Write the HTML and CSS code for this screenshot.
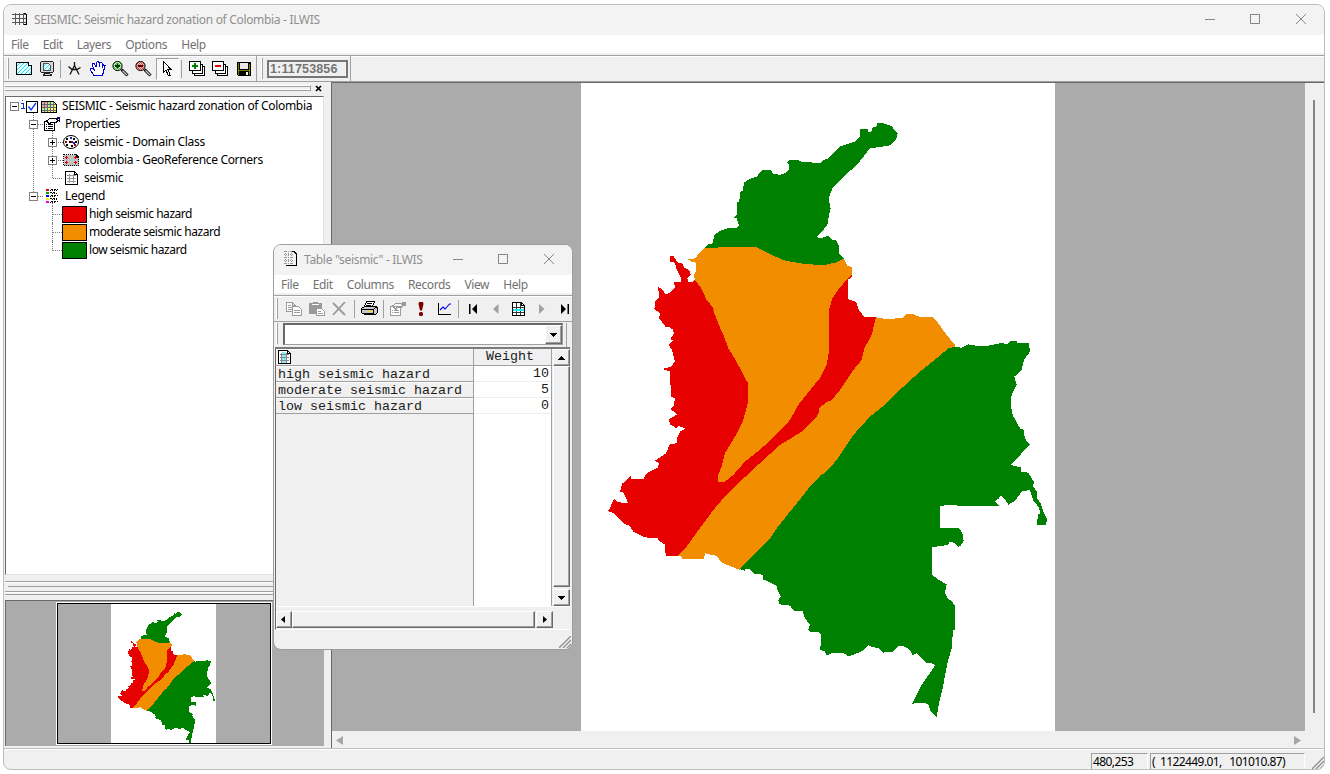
FILE: index.html
```html
<!DOCTYPE html>
<html lang="en">
<head>
<meta charset="utf-8">
<title>SEISMIC: Seismic hazard zonation of Colombia - ILWIS</title>
<link rel="stylesheet" href="styles.css">
</head>
<body>
<svg class="defs" width="0" height="0">
  <defs>
    <symbol id="colombia" viewBox="581 83 474 648">
      <g fill="#e60000">
        <path transform="translate(580 100) scale(.33333)" d="M270 468 280 468 294 488 305 488 312 502 328 510 332 525 322 535 325 545 340 545 345 537 400 560 430 700 280 690 270 682 255 682 255 668 240 660 235 655 243 645 240 636 223 627 226 605 238 592 234 562 243 565 250 572 257 583 270 578 285 562 282 545 303 545 303 535 290 508 285 488 270 486ZM803 536 816 525 816 530 803 540 803 597 827 605 835 628 852 650 888 652 886 660 876 695 740 695 740 590Z"/>
        <path transform="translate(590 310) scale(.33333)" d="M195 0 212 10 206 25 215 35 228 52 245 48 252 70 240 88 249 90 237 105 246 120 255 155 242 170 216 177 240 185 243 260 255 265 250 290 242 297 261 313 237 328 240 343 260 355 265 348 287 355 270 365 260 385 262 400 240 402 228 430 195 452 208 460 203 473 170 490 160 507 125 508 121 497 105 515 97 520 90 545 100 548 115 580 105 580 80 575 72 567 65 580 60 597 52 602 75 612 100 640 120 648 130 665 165 682 203 685 210 695 225 703 227 738 262 738 600 600 720 272 720 0Z"/>
        <path transform="translate(820 300) scale(.33333)" d="M35 0 87 0 110 10 118 35 132 50 168 52 200 100 140 250 0 330-10 232 0 20Z"/>
      </g>
      <g fill="#f28d00">
        <path transform="translate(580 100) scale(.33333)" d="M375 443 600 430 792 478 802 497 815 502 816 525 803 536 775 568 757 595 747 630 745 690 422 690 410 650 397 620 380 600 362 562 345 540 342 525 348 515 348 488 335 486 330 482 322 478 345 475 360 458Z"/>
        <path transform="translate(590 310) scale(.33333)" d="M369 0 385 40 400 75 415 115 437 150 455 185 474 220 473 280 460 330 435 380 405 430 395 470 384 495 384 516 404 516 430 495 465 455 500 427 545 388 600 330 625 285 670 228 690 205 710 165 716 130 717 0ZM262 738 275 740 275 748 342 748 345 730 380 738 395 758 450 780 720 500 720 272 706 278 695 290 680 320 640 362 570 405 520 450 450 515 400 565 370 600 320 668 290 710Z"/>
        <path transform="translate(820 300) scale(.33333)" d="M168 52 185 55 200 58 248 53 258 43 280 43 300 51 337 52 355 70 378 102 405 135 405 145 0 540-2 325 8 316 35 300 60 270 100 210 125 180 133 145 155 105Z"/>
      </g>
      <g fill="#008000">
        <path transform="translate(580 100) scale(.33333)" d="M375 443 385 433 399 430 402 405 417 395 432 388 447 384 470 383 477 375 470 355 460 352 470 345 471 307 478 304 480 275 488 273 492 248 507 238 530 230 545 211 574 211 578 220 600 225 617 218 627 207 627 195 621 187 630 180 655 179 665 187 722 188 730 180 745 176 770 150 778 140 825 125 840 110 840 88 863 88 865 96 875 94 875 85 890 78 890 70 912 70 935 78 945 92 953 100 950 115 930 136 905 140 870 145 858 160 835 190 800 222 770 250 757 265 746 295 752 325 747 345 742 375 728 392 712 410 718 415 745 408 755 418 770 422 776 435 778 460 792 475 770 487 730 496 670 491 615 482 575 465 545 450 528 440 414 440 414 443Z"/>
        <path transform="translate(590 310) scale(.33333)" d="M450 778 465 783 465 777 478 777 490 787 505 790 520 797 520 810 725 810 725 471 690 500 660 530 600 605 560 655 530 700 480 752Z"/>
        <path transform="translate(820 300) scale(.33333)" d="M385 145 405 141 425 143 445 133 475 138 500 138 540 130 565 131 570 124 590 124 593 129 627 129 630 155 612 180 605 210 583 230 590 255 575 285 572 315 578 345 600 385 613 390 612 405 618 420 630 435 605 460 573 495 603 502 604 515 625 518 641 545 640 560 650 575 652 595 662 610 672 640 681 657 678 674 652 674 653 645 660 640 657 622 640 602 630 570 605 575 585 603 565 614 555 597 542 586 535 597 525 603 537 617 411 617 405 614 375 616 360 619 360 684 418 685 430 705 428 730 415 740 405 730 390 724 383 735 360 738 336 742 336 780 0 780 0 527 20 515 50 480 100 405 150 350 200 310 250 260 300 215 350 175Z"/>
        <path transform="translate(740 540) scale(.33333)" d="M0 87 84 0 672 0 660 20 655 18 650 7 630 3 620 12 600 17 576 21 576 105 600 122 620 133 615 158 622 175 635 183 645 198 645 270 639 270 635 325 622 370 607 450 597 490 590 530 572 515 565 492 545 488 517 491 545 435 585 377 580 371 560 369 545 355 530 340 517 346 510 330 490 318 475 318 460 335 428 338 415 325 395 320 385 315 370 332 345 342 325 349 310 338 275 340 260 347 255 335 241 330 243 285 235 277 212 277 205 268 210 255 195 235 188 214 162 212 150 197 118 193 115 180 123 170 112 150 110 137 85 125 70 118 68 103 45 102 30 88Z"/>
      </g>
    </symbol>
    <pattern id="cyan" width="4" height="4" patternUnits="userSpaceOnUse"><rect width="4" height="4" fill="#e2ffff"/><path d="M0 0h1v1h-1zM2 2h1v1h-1zM1 3h1v1h-1zM3 1h1v1h-1z" fill="#29d9ec"/></pattern>
    <pattern id="greendots" width="2" height="2" patternUnits="userSpaceOnUse"><rect width="2" height="2" fill="#d9ffd9"/><path d="M0 0h1v1h-1zM1 1h1v1h-1z" fill="#4ad04a"/></pattern>
    <pattern id="reddots" width="2" height="2" patternUnits="userSpaceOnUse"><rect width="2" height="2" fill="#f0b8b8"/><path d="M0 0h1v1h-1zM1 1h1v1h-1z" fill="#d05858"/></pattern>
    <symbol id="lens" viewBox="0 0 17 17">
      <path d="M9.500 8.500 15.500 14.500" stroke="#000" stroke-width="3"/><path d="M10.500 9.500 15 14" stroke="#d0d0d0" stroke-width="1.200"/>
    </symbol>
    <symbol id="caption" viewBox="0 0 110 12">
      <path d="M0 6.500h10M45.500 1.500h9v9h-9zM91 1l10 10M101 1 91 11" fill="none" stroke="#858585"/>
    </symbol>
    <symbol id="layers" viewBox="0 0 17 16">
      <path d="M5.500 5.500h10v9h-10z" fill="#fff" stroke="#000"/><path d="M3.500 3.500h10v9h-10z" fill="#fff" stroke="#000"/><path d="M.5.500h11v9h-11z" fill="#fff" stroke="#000"/>
    </symbol>
    <symbol id="grip" viewBox="0 0 12 12"><path d="M0 12 12 0M4 12l8-8M8 12l4-4" stroke="#8f8f8f" stroke-width="1.400"/></symbol>
    <symbol id="sheet" viewBox="0 0 13 14">
      <path d="M.5.500h9l3 3v10h-12z" fill="#fff" stroke="#000"/><path d="M9.500.500v3h3" fill="none" stroke="#000"/>
    </symbol>
  </defs>
</svg>

<div class="window main">
  <header class="titlebar">
    <svg class="app-icon" width="17" height="14" shape-rendering="crispEdges"><path d="M0 2.500h15M0 6.500h15M0 10.500h15M3.500.500v12M7.500.500v12M11.500.500v12" stroke="#555" fill="none"/><path d="M12 1.500h2M14.500 2v10.500h-3" stroke="#000" fill="none"/></svg>
    <span class="title title-main">SEISMIC: Seismic hazard zonation of Colombia - ILWIS</span>
    <svg class="caption" width="110" height="12" viewBox="0 0 110 12"><use href="#caption"/></svg>
  </header>
  <nav class="menubar"><span>File</span><span>Edit</span><span>Layers</span><span>Options</span><span>Help</span></nav>
  <div class="toolbar">
    <i class="handle"></i>
    <span class="tool"><svg width="17" height="13" shape-rendering="crispEdges"><path d="M.5.500h12l3 3v9h-15z" fill="url(#cyan)" stroke="#000"/><path d="M12.500.500v3h3" fill="#fff" stroke="#000"/></svg></span>
    <span class="tool"><svg width="15" height="16" shape-rendering="crispEdges"><path d="M1.500.500h11l1 1v9l-1 1h-11l-1-1v-9z" fill="#d8d8d8" stroke="#222"/><path d="M3.500 2.500h5l2 2v5h-7z" fill="url(#cyan)" stroke="#555"/><path d="M4 12h6v1h2v2H3v-2h1z" fill="#222"/><path d="M5 13h5v1H5z" fill="#ddd"/></svg></span>
    <i class="sep first"></i>
    <span class="tool"><svg width="13" height="13"><path d="M6.500 0v4M6.500 3.500 2 12.500M6.500 3.500l4.500 9M.5 4.500 4 7.500h5l3.500-2" fill="none" stroke="#111" stroke-width="1.300"/></svg></span>
    <span class="tool"><svg width="17" height="16" shape-rendering="crispEdges"><path d="M5 14.500 1.500 9.500v-2h2l2 2-2-5v-2h2L7 6V1.500l2-1 1 1v4l1-4 2 .5v5l1.500-3 1.500.500-1 4-1.500 6V15z" fill="#fff" stroke="#0000e0"/></svg></span>
    <span class="tool"><svg width="17" height="16" viewBox="0 0 17 16"><use href="#lens" width="17" height="17"/><circle cx="5.500" cy="5" r="4.600" fill="url(#greendots)" stroke="#000"/><path d="M3 5h5M5.500 2.500v5" stroke="#003800" stroke-width="1.800"/></svg></span>
    <span class="tool"><svg width="17" height="16" viewBox="0 0 17 16"><use href="#lens" width="17" height="17"/><circle cx="5.500" cy="5" r="4.600" fill="url(#reddots)" stroke="#000"/><path d="M3 5h5" stroke="#500" stroke-width="1.800"/></svg></span>
    <span class="tool pressed"><svg width="9" height="15" shape-rendering="crispEdges"><path d="M.5.500v11l2.500-2.500 2 5h2l-2-5.500h3z" fill="#fff" stroke="#000"/></svg></span>
    <i class="sep tight"></i>
    <span class="tool"><svg width="17" height="16" shape-rendering="crispEdges"><use href="#layers" width="17" height="16"/><path d="M3 5h6M6 2v6" stroke="#008000" stroke-width="2"/></svg></span>
    <span class="tool"><svg width="17" height="16" shape-rendering="crispEdges"><use href="#layers" width="17" height="16"/><path d="M3 5h6" stroke="#e00000" stroke-width="2"/></svg></span>
    <span class="tool"><svg width="14" height="14" shape-rendering="crispEdges"><path d="M0 0h14v14H1l-1-1z" fill="#000"/><path d="M1 1h1v12H1zM12 2h1v11h-1zM2 8h10v1H2z" fill="#808000"/><path d="M3 1h8v6H3z" fill="#e8e8e8"/><path d="M9 10h2v3H9z" fill="#fff"/></svg></span>
    <i class="sep end"></i><i class="handle scale-handle"></i>
    <span class="scale">1:11753856</span>
    <i class="sep last"></i>
  </div>
  <div class="body">
    <aside class="side">
      <div class="dock-head"><i class="dock-lines"></i><svg width="7" height="7"><path d="M1 1l5 5M6 1 1 6" stroke="#000" stroke-width="1.700"/></svg></div>
      <div class="tree">
        <div class="row"><svg width="56" height="18" shape-rendering="crispEdges"><path d="M4.500 5.500h8v8h-8z" fill="#fff" stroke="#7f7f7f"/><path d="M6 9.500h5" stroke="#000"/><path d="M15 6h2v5M15 11.500h4M16.500 3v1" fill="none" stroke="#1030e0"/><path d="M27.500 16v2" stroke="#777" stroke-dasharray="1 1"/><path d="M20.500 4.500h11v11h-11z" fill="#fff" stroke="#000"/><path d="M22.500 9.500 25 13l5-7" fill="none" stroke="#0030ff" shape-rendering="auto" stroke-width="1.300"/><path d="M35.500 4.500h12l3 3v8h-15z" fill="#fff"/><path d="M36 5h5v5h-5z" fill="#f8a8a8"/><path d="M41 5h5v5h-5z" fill="#a0f0a0"/><path d="M46 6h4v9h-4zM41 10h5v5h-5z" fill="#faf480"/><path d="M36 10h5v5h-5z" fill="#c0f0a0"/><path d="M35 7.500h16M35 10.500h16M35 13.500h16M38.500 4v12M41.500 4v12M44.500 4v12M47.500 4v12" stroke="#666"/><path d="M35.500 4.500h12l3 3v8h-15z" fill="none" stroke="#000"/></svg><span class="t-root">SEISMIC - Seismic hazard zonation of Colombia</span></div>
        <div class="row"><svg width="59" height="18" shape-rendering="crispEdges"><path d="M27.500 0v5M32 9.500h6" stroke="#777" stroke-dasharray="1 1"/><path d="M27.500 14v4M46.500 16v2" stroke="#777" stroke-dasharray="1 1"/><path d="M23.500 5.500h8v8h-8z" fill="#fff" stroke="#7f7f7f"/><path d="M25 9.500h5" stroke="#000"/><path d="M38.500 6.500h10v9h-10z" fill="#fff" stroke="#000"/><path d="M40 9.500h1M42 9.500h5M40 11.500h1M42 11.500h5M40 13.500h1M42 13.500h5" stroke="#000"/><path d="M41 5.500l3-2h6l2 2-2 2h-5l-1 2-2-2z" fill="#fff" stroke="#000"/><path d="M51 2h3v5h-1V4h-2z" fill="#000080"/></svg><span class="t-prop">Properties</span></div>
        <div class="row"><svg width="78" height="18" shape-rendering="crispEdges"><path d="M27.500 0v18M46.500 0v18M52 9.500h5" stroke="#777" stroke-dasharray="1 1"/><path d="M42.500 5.500h8v8h-8z" fill="#fff" stroke="#7f7f7f"/><path d="M44 9.500h5M46.500 7v5" stroke="#000"/><g shape-rendering="auto"><ellipse cx="65" cy="9" rx="7.500" ry="6.500" fill="#fff" stroke="#000"/><path d="M60 5h2v2h-2zM67 5h2v2h-2zM63 8h2v2h-2zM60 11h2v2h-2zM65 12h2v2h-2zM69 8h2v2h-2z" fill="#000"/><path d="M64 4h2v2h-2zM67 9h2v2h-2z" fill="#1020d0"/><path d="M59 8h2v2h-2zM65 8h2v2h-2zM68 11h2v2h-2z" fill="#a00000"/></g></svg><span class="t-dom">seismic - Domain Class</span></div>
        <div class="row"><svg width="78" height="18" shape-rendering="crispEdges"><path d="M27.500 0v18M46.500 0v18M52 9.500h5" stroke="#777" stroke-dasharray="1 1"/><path d="M42.500 5.500h8v8h-8z" fill="#fff" stroke="#7f7f7f"/><path d="M44 9.500h5M46.500 7v5" stroke="#000"/><path d="M57.500 3.500h12l3 3v8h-15z" fill="#c0c0c0"/><path d="M57.500 3.500h12l3 3v8h-15z" fill="none" stroke="#000" stroke-dasharray="1 1"/><path d="M70 3h1v1h1v1h1v2h-3z" fill="#000"/><path d="M59 6.500h3M60.500 5v3M68 6.500h3M69.500 5v3M59 11.500h3M60.500 10v3M68 11.500h3M69.500 10v3" stroke="#e00000"/></svg><span class="t-geo">colombia - GeoReference Corners</span></div>
        <div class="row"><svg width="78" height="18" shape-rendering="crispEdges"><path d="M27.500 0v18M46.500 0v9.500M47 9.500h10" stroke="#777" stroke-dasharray="1 1"/><g transform="translate(59 2)"><use href="#sheet" width="13" height="14"/><path d="M2 4.500h9M2 7.500h9M2 10.500h9M4.500 3v9M8.500 3v9" stroke="#999"/></g></svg><span class="t-sei">seismic</span></div>
        <div class="row"><svg width="59" height="18" shape-rendering="crispEdges"><path d="M27.500 0v5M32 9.500h6M46.500 16v2" stroke="#777" stroke-dasharray="1 1"/><path d="M23.500 5.500h8v8h-8z" fill="#fff" stroke="#7f7f7f"/><path d="M25 9.500h5" stroke="#000"/><path d="M40 3h3" stroke="#e00000" stroke-width="2"/><path d="M40 6h3" stroke="#00a000" stroke-width="2"/><path d="M40 9h3" stroke="#0000f0" stroke-width="2"/><path d="M40 12h3" stroke="#f0f000" stroke-width="2"/><path d="M40 15h3" stroke="#f000f0" stroke-width="2"/><path d="M45 2.500h7M44 5.500h6M45 8.500h7M44 11.500h7M45 14.500h7" stroke="#000" stroke-dasharray="2 1"/><path d="M44 3.500h7M46 6.500h6M44 9.500h6M46 12.500h6M44 15.500h6" stroke="#000" stroke-dasharray="1 1"/></svg><span class="t-leg">Legend</span></div>
        <div class="row leaf"><i class="twig"></i><i class="swatch high"></i><span>high seismic hazard</span></div>
        <div class="row leaf"><i class="twig"></i><i class="swatch moderate"></i><span>moderate seismic hazard</span></div>
        <div class="row leaf"><i class="twig end"></i><i class="swatch low"></i><span>low seismic hazard</span></div>
      </div>
      <div class="splitter"></div>
      <div class="overview"><div class="extent"><svg width="105" height="144" shape-rendering="crispEdges"><use href="#colombia" x=".7" width="105" height="143.500"/></svg></div></div>
    </aside>
    <main class="view">
      <div class="canvas"><svg width="474" height="648" shape-rendering="crispEdges"><use href="#colombia" width="474" height="648"/></svg></div>
      <div class="vscroll"><i></i></div>
      <div class="hscroll"><svg width="7" height="9"><path d="M7 0v9L0 4.500z" fill="#a6a6a6"/></svg><svg width="7" height="9"><path d="M0 0v9L7 4.500z" fill="#a6a6a6"/></svg></div>
    </main>
  </div>
  <footer class="status"><span class="cell pix">480,253</span><span class="cell coord">(&nbsp; 1122449.01, &nbsp; 101010.87)</span><svg class="grip" width="12" height="12" viewBox="0 0 12 12"><use href="#grip"/></svg></footer>
</div>

<section class="window table-window">
  <header class="titlebar">
    <svg class="app-icon" width="13" height="16" shape-rendering="crispEdges"><path d="M0 .5h9M0 3.500h10M0 6.500h10M0 9.500h10M0 12.500h10M1.500 0v14M4.500 0v14M7.500 0v14" stroke="#999" stroke-dasharray="1 1"/><path d="M8 .5h2v1h1v1h1v12H2" fill="none" stroke="#000"/></svg>
    <span class="title title-table">Table "seismic" - ILWIS</span>
    <svg class="caption" width="110" height="12" viewBox="0 0 110 12"><use href="#caption"/></svg>
  </header>
  <nav class="menubar"><span>File</span><span>Edit</span><span>Columns</span><span>Records</span><span>View</span><span>Help</span></nav>
  <div class="toolbar">
    <i class="handle"></i>
    <span class="tool"><svg width="16" height="14" shape-rendering="crispEdges"><path d="M.5.500h6l3 3v6h-9zM6 .5v3h3M2 3.500h3M2 5.500h4M2 7.500h4" fill="#fff" stroke="#9a9a9a"/><path d="M6.500 4.500h6l3 3v6h-9z" fill="#fff" stroke="#9a9a9a"/><path d="M8 8.500h6M8 10.500h6" stroke="#9a9a9a"/></svg></span>
    <span class="tool"><svg width="16" height="14" shape-rendering="crispEdges"><path d="M0 1h4V0h5v1h4v11H0z" fill="#999"/><path d="M3 2.500h7" stroke="#fff"/><path d="M7.500 6.500h5l3 3v4h-8z" fill="#fff" stroke="#999"/><path d="M9 9.500h3M9 11.500h5" stroke="#999"/></svg></span>
    <span class="tool"><svg width="15" height="14"><path d="M1 1l12 12M13 0 1 13" stroke="#999" stroke-width="1.800"/></svg></span>
    <i class="sep"></i>
    <span class="tool"><svg width="17" height="15" shape-rendering="crispEdges"><path d="M5.500.500h8l-2 5h-8z" fill="#fff" stroke="#000"/><path d="M6 2.500h5M5 4.500h5" stroke="#000"/><path d="M3.500 5.500h11l2 1v5l-2 2h-11l-3-2v-4z" fill="#c8c8c8" stroke="#000"/><path d="M1 8.500h11l3-2M1 12.500h11M12.500 9v5" stroke="#000" fill="none"/><path d="M7 10h4v1H7z" fill="#f0e000"/></svg></span>
    <i class="sep thin"></i>
    <span class="tool"><svg width="17" height="14" shape-rendering="crispEdges"><path d="M.5 4.500h10v9h-10zM3 3.500l3-2h5l2 2-2 2H7l-1 2-2-2z" fill="#fff" stroke="#9a9a9a"/><path d="M2 8.500h1M4 8.500h5M2 10.500h1M4 10.500h5" stroke="#9a9a9a"/><path d="M12 0h4v4h-4z" fill="#9a9a9a"/></svg></span>
    <span class="tool bang"><svg width="6" height="14"><path d="M1 0h4l.5 2L4 8.500H2L.5 2z" fill="#800000"/><rect x="1" y="10" width="4" height="4" rx="1.500" fill="#800000"/></svg></span>
    <span class="tool"><svg width="13" height="13"><path d="M.5 1v11.500H13" fill="none" stroke="#000" shape-rendering="crispEdges"/><path d="M2 8l3-3 2 2 4.500-5H13" fill="none" stroke="#0000e0" stroke-width="1.100"/></svg></span>
    <i class="sep narrow"></i>
    <span class="tool"><svg width="8" height="10"><path d="M0 0h1.500v10H0zM8 0v10L3 5z" fill="#000"/></svg></span>
    <span class="tool"><svg width="6" height="10"><path d="M5.500 0v10L0 5z" fill="#a0a0a0"/></svg></span>
    <span class="tool"><svg width="13" height="14" shape-rendering="crispEdges"><use href="#sheet" width="13" height="14"/><path d="M1 5.500h11M1 10.500h11M4.500 1v12M8.500 1v12" stroke="#333"/><path d="M1 8h11" stroke="#20e8f0" stroke-width="2"/></svg></span>
    <span class="tool"><svg width="6" height="10"><path d="M0 0v10L5.500 5z" fill="#a0a0a0"/></svg></span>
    <span class="tool"><svg width="8" height="10"><path d="M6.500 0H8v10H6.500zM0 0v10l5-5z" fill="#000"/></svg></span>
  </div>
  <div class="command"><i class="handle"></i><div class="combo"><b class="btn"><svg width="7" height="4" shape-rendering="crispEdges"><path d="M0 0h7L3.500 4z"/></svg></b></div><i class="combo-end"></i></div>
  <div class="grid-area">
    <div class="names">
      <div class="gcell head"><svg width="13" height="14" shape-rendering="crispEdges"><use href="#sheet" width="13" height="14"/><path d="M4 2h4v11H4z" fill="#90eaf0"/><path d="M2 4.500h9M2 7.500h9M2 10.500h9M3.500 3v10M8.500 3v10" stroke="#888"/></svg></div>
      <div class="gcell">high seismic hazard</div><div class="gcell">moderate seismic hazard</div><div class="gcell">low seismic hazard</div>
    </div>
    <div class="weights">
      <div class="gcell head">Weight</div><div class="gcell">10</div><div class="gcell">5</div><div class="gcell">0</div>
    </div>
    <div class="bar-v"><b class="btn"><svg width="7" height="4" shape-rendering="crispEdges"><path d="M0 4h7L3.500 0z"/></svg></b><b class="btn thumb"></b><b class="btn"><svg width="7" height="4" shape-rendering="crispEdges"><path d="M0 0h7L3.500 4z"/></svg></b></div>
  </div>
  <div class="bar-h"><b class="btn"><svg width="4" height="7"><path d="M4 0v7L0 3.500z"/></svg></b><b class="btn thumb"></b><b class="btn"><svg width="4" height="7"><path d="M0 0v7l4-3.500z"/></svg></b></div>
  <div class="table-foot"><svg width="12" height="12" viewBox="0 0 12 12"><use href="#grip"/></svg></div>
</section>
</body>
</html>
```

FILE: styles.css
```css
* { box-sizing: border-box; }
html, body { height: 100%; }
body {
  margin: 0;
  padding: 4px 0 0 3px;
  background: #fff;
  overflow: hidden;
  font: 12px "Noto Sans", "Open Sans", sans-serif;
  color: #000;
}
svg { display: block; flex: none; }
.defs { position: absolute; }
span { white-space: pre; }

.window {
  display: flex;
  flex-direction: column;
  border: 1px solid #bdbdbd;
  border-radius: 8px;
  background: #f0f0f0;
  overflow: hidden;
}
.main { width: 1322px; height: 766px; }

.titlebar {
  display: flex;
  align-items: center;
  flex: none;
  height: 30px;
  padding: 0 0 2px 8px;
  background: #f3f3f3;
}
.main .app-icon { margin-right: 5px; }
.title { color: #8f8f8f; }
.title-main { letter-spacing: -0.32px; }
.title-table { letter-spacing: -0.32px; }
.caption { margin-left: auto; margin-top: -1px; }
.main .caption { margin-right: 9px; }

.menubar {
  display: flex;
  flex: none;
  height: 20px;
  padding-left: 7px;
  gap: 14px;
  background: #fff;
  border-bottom: 2px solid #f0f0f0;
  color: #717171;
  line-height: 20px;
  letter-spacing: -0.37px;
}

.toolbar {
  display: flex;
  align-items: center;
  flex: none;
  height: 27px;
  border-top: 1px solid #a0a0a0;
  border-bottom: 1px solid #a0a0a0;
  box-shadow: inset 0 1px #fff;
  padding-left: 3px;
}
.handle {
  flex: none;
  width: 2px;
  height: 21px;
  margin-right: 4px;
  border-right: 1px solid #a0a0a0;
  border-left: 1px solid #fff;
}
.tool {
  display: flex;
  align-items: center;
  justify-content: center;
  flex: none;
  width: 23px;
  height: 22px;
}
.pressed {
  margin-left: 1px;
  border: 1px solid #fff;
  border-top-color: #a0a0a0;
  border-left-color: #a0a0a0;
  background: #f8f8f8;
}
.sep {
  flex: none;
  width: 1px;
  height: 18px;
  margin: 0 2px 0 2px;
  background: #a0a0a0;
}
.main .sep.first { margin: 0 2px 0 1px; }
.sep.tight { margin: 0 4px 0 2px; }
.main .sep.end { height: 25px; margin: 0 4px 0 1px; }
.sep.last { height: 25px; margin-left: 2px; }
.main .scale-handle { margin-right: 4px; }
.scale {
  width: 81px;
  height: 18px;
  border: 2px solid #767676;
  padding-left: 1px;
  font: bold 12.500px/15px "Liberation Sans", sans-serif;
  letter-spacing: 0.15px;
  color: #747474;
}

.body { display: flex; flex: none; height: 667px; }
.side { display: flex; flex-direction: column; width: 327px; padding: 0 7px 0 1px; }
.dock-head { display: flex; align-items: center; flex: none; height: 14px; padding-bottom: 2px; }
.dock-lines {
  width: 306px;
  height: 6px;
  margin-right: 4px;
  border: 1px solid #a0a0a0;
  border-left: 0;
  border-top-color: #fff;
  box-shadow: inset 0 1px #a0a0a0, inset 0 -1px #fff;
}
.tree {
  flex: none;
  height: 479px;
  border: 1px solid #e3e3e3;
  border-top: 1px solid #696969;
  border-left: 1px solid #696969;
  background: #fff;
  letter-spacing: -0.33px;
}
.row { display: flex; align-items: center; height: 18px; }
.row span { line-height: 18px; }
.t-root { letter-spacing: -0.31px; }
.leaf { padding-left: 46px; letter-spacing: -0.45px; }
.twig {
  align-self: stretch;
  width: 10px;
  border-left: 1px dotted #777;
  background: linear-gradient(90deg, #888 50%, transparent 50%) 0 9px / 2px 1px repeat-x;
}
.twig.end { align-self: flex-start; height: 10px; }
.swatch { width: 25px; height: 17px; margin-right: 2px; border: 1px solid #000; }
.high { background: #e60000; }
.moderate { background: #f28d00; }
.low { background: #008000; }

.splitter {
  flex: none;
  height: 25px;
  background: linear-gradient(#a0a0a0, #a0a0a0) 0 6px / 100% 1px no-repeat,
    linear-gradient(#fff, #fff) 0 7px / 100% 1px no-repeat,
    linear-gradient(#a0a0a0, #a0a0a0) 3px 11px / 100% 1px no-repeat,
    linear-gradient(#a0a0a0, #a0a0a0) 0 16px / 100% 1px no-repeat,
    linear-gradient(#fff, #fff) 0 17px / 100% 1px no-repeat,
    linear-gradient(#a0a0a0, #a0a0a0) 0 19px / 100% 1px no-repeat;
}
.overview {
  flex: none;
  height: 146px;
  padding: 1px 0 0 50px;
  border-top: 1px solid #696969;
  border-left: 1px solid #696969;
  background: #ababab;
}
.extent {
  width: 216px;
  height: 143px;
  overflow: hidden;
  border: 1px solid #fff;
  outline: 1px solid #000;
  outline-offset: -2px;
  padding-left: 54px;
}
.extent svg { background: #fff; }

.view {
  display: grid;
  grid-template-columns: 973px 1fr;
  grid-template-rows: 648px 1fr;
  flex: 1;
  border-top: 1px solid #696969;
  border-left: 1px solid #696969;
}
.canvas { display: flex; padding-left: 249px; background: #ababab; }
.canvas svg { background: #fff; }
.vscroll { padding: 17px 0 0 8px; }
.vscroll i { display: block; width: 2px; height: 613px; background: #868686; }
.hscroll { display: flex; justify-content: space-between; align-items: center; padding: 0 4px 0 4px; }

.status {
  display: flex;
  flex: 1;
  padding: 3px 0 0 1087px;
  border-top: 1px solid #fff;
}
.main .status { box-shadow: 0 -1px #c0c0c0; }
.cell {
  height: 17px;
  border-top: 1px solid #a0a0a0;
  border-left: 1px solid #a0a0a0;
  border-right: 1px solid #fff;
  padding-left: 1px;
  line-height: 15px;
  letter-spacing: -0.6px;
}
.pix { width: 57px; margin-right: 2px; }
.coord { width: 155px; }
.grip { margin: 4px 0 0 7px; }

.table-window {
  position: absolute;
  left: 273px;
  top: 244px;
  width: 300px;
  height: 406px;
  border-color: #9d9d9d;
}
.table-window .titlebar { padding-left: 10px; }
.table-window .app-icon { margin-right: 7px; }
.table-window .caption { margin-right: 9px; }
.table-window .toolbar { height: 27px; padding-left: 2px; }
.table-window .sep { margin: 0 3px; }
.table-window .sep.thin { margin: 0 3px 0 2px; }
.table-window .sep.narrow { margin: 0 2px; }
.table-window .bang { padding-right: 2px; }
.command { display: flex; flex: none; height: 25px; padding: 1px 0 0 2px; }
.combo {
  display: flex;
  justify-content: flex-end;
  width: 280px;
  height: 22px;
  margin-left: 1px;
  border: 1px solid #a0a0a0;
  border-top: 2px solid #696969;
  border-left: 2px solid #696969;
  background: #fff;
}
.combo-end { width: 4px; border-right: 1px solid #a0a0a0; }
.btn {
  display: flex;
  align-items: center;
  justify-content: center;
  flex: none;
  width: 17px;
  height: 17px;
  background: #f0f0f0;
  border: 1px solid #fff;
  border-right-color: #696969;
  border-bottom-color: #696969;
  box-shadow: inset -1px -1px #a0a0a0;
}
.combo .btn { height: 19px; }
.grid-area {
  display: flex;
  flex: none;
  height: 259px;
  margin: 0 2px 0 1px;
  border-top: 2px solid #7c7c7c;
  border-left: 1px solid #696969;
  font: 13.333px "Liberation Mono", monospace;
}
.gcell { height: 16px; line-height: 15px; white-space: pre; border-bottom: 1px solid #a0a0a0; color: #1c1c1c; }
.names { width: 198px; border-right: 1px solid #a0a0a0; }
.names .gcell { padding-left: 2px; border-top: 1px solid #fff; }
.names .head { padding: 0 0 0 2px; height: 17px; }
.weights { width: 78px; background: #fff; border-right: 1px solid #a0a0a0; }
.weights .gcell { padding-right: 2px; text-align: right; border-color: #eee; line-height: 16px; }
.weights .head { height: 17px; background: #f0f0f0; text-align: left; padding: 0 0 0 12px; border-color: #a0a0a0; line-height: 16px; }
.bar-v { display: flex; flex-direction: column; width: 17px; margin-left: 1px; }
.bar-v .thumb { height: 221px; margin-bottom: 2px; }
.bar-h {
  display: flex;
  flex: none;
  height: 24px;
  margin: 0 2px 0 1px;
  padding-top: 5px;
  border-left: 1px solid #696969;
  border-bottom: 1px solid #fff;
  box-shadow: inset 0 1px #fff;
}
.bar-h .thumb { width: 243px; margin-right: 1px; }
.bar-h .btn:first-child { width: 16px; padding-right: 2px; }
.table-foot { display: flex; flex: 1; align-items: flex-end; justify-content: flex-end; padding: 0 1px 1px 0; }
```
